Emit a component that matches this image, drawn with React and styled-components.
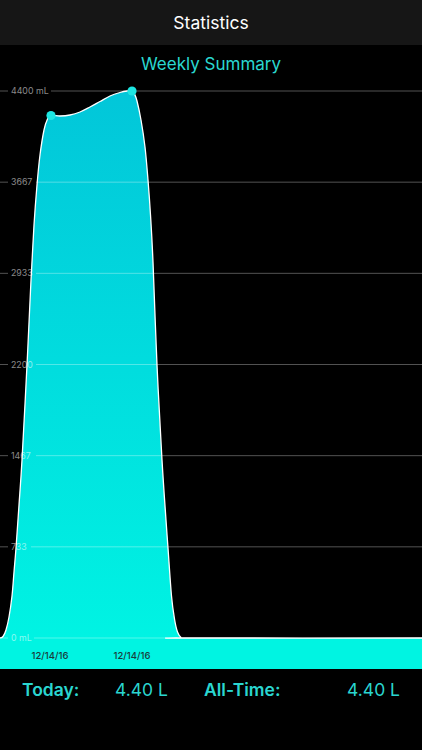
import React from 'react';
import styled, { createGlobalStyle } from 'styled-components';

const GlobalStyle = createGlobalStyle`
  html, body {
    margin: 0;
    padding: 0;
    background: #000;
  }
  body {
    font-family: Inter, "Open Sans", "Liberation Sans", sans-serif;
    -webkit-font-smoothing: antialiased;
  }
`;

const Screen = styled.div`
  width: 422px;
  height: 750px;
  background: #000;
  display: flex;
  flex-direction: column;
  overflow: hidden;
`;

const NavBar = styled.div`
  height: 45px;
  flex-shrink: 0;
  background: #161616;
  display: flex;
  align-items: center;
  justify-content: center;
  color: #fff;
  font-size: 17.5px;
  font-weight: 400;
`;

const Heading = styled.div`
  height: 38px;
  flex-shrink: 0;
  display: flex;
  align-items: center;
  justify-content: center;
  color: #2ad8d0;
  font-size: 17px;
`;

const ChartSvg = styled.svg`
  display: block;
  flex-shrink: 0;
`;

const AxisBand = styled.div`
  height: 24px;
  flex-shrink: 0;
  background: #00f4e2;
  position: relative;
`;

const DateLabel = styled.span`
  position: absolute;
  top: 5px;
  transform: translateX(-50%);
  font-size: 9.5px;
  font-weight: 500;
  color: #1b3b3b;
`;

const Stats = styled.div`
  display: grid;
  grid-template-columns: 93px 89px 1fr auto;
  align-items: center;
  padding: 0 22px;
  height: 40px;
  color: #2ad6d0;
  font-size: 17.5px;
`;

const StatLabel = styled.span`
  font-weight: 600;
`;

const StatValue = styled.span`
  font-weight: 400;
`;

// chart geometry, in screen coordinates
const TOP = 83;
const HEIGHT = 562;
const ZERO_Y = 638;
const MAX_Y = 91;

const grid = [
  { label: '4400 mL', w: 35 },
  { label: '3667', w: 20 },
  { label: '2933', w: 20 },
  { label: '2200', w: 20 },
  { label: '1467', w: 20 },
  { label: '733', w: 15 },
  { label: '0 mL', w: 18 },
];

const outline = [
  [0, 638], [3, 636.5], [6, 630], [9, 617], [12, 596], [14, 572], [16, 548],
  [19, 505], [22, 460], [27, 365], [31, 280], [34, 225], [37, 185], [40, 155],
  [44, 130], [47.5, 119], [51, 115.5], [60, 116], [70, 115], [80, 112],
  [90, 107], [100, 101.5], [110, 96], [120, 92.5], [127, 91], [132, 91],
  [134.5, 94], [137, 101], [141, 120], [145, 147], [148, 180], [150.5, 215],
  [153, 262], [157, 365], [162, 460], [166, 520], [168, 548], [171.5, 596],
  [174.5, 619], [177.5, 632], [181, 637.5], [184, 638], [422, 638],
];

function smoothPath(pts) {
  let d = `M ${pts[0][0]} ${pts[0][1]}`;
  for (let i = 0; i < pts.length - 1; i++) {
    const p0 = pts[i - 1] || pts[i];
    const p1 = pts[i];
    const p2 = pts[i + 1];
    const p3 = pts[i + 2] || p2;
    const c1x = p1[0] + (p2[0] - p0[0]) / 6;
    const c1y = p1[1] + (p2[1] - p0[1]) / 6;
    const c2x = p2[0] - (p3[0] - p1[0]) / 6;
    const c2y = p2[1] - (p3[1] - p1[1]) / 6;
    d += ` C ${c1x.toFixed(2)} ${c1y.toFixed(2)}, ${c2x.toFixed(2)} ${c2y.toFixed(2)}, ${p2[0]} ${p2[1]}`;
  }
  return d;
}

function Chart() {
  const line = smoothPath(outline);
  const area = `${line} L 422 ${ZERO_Y} L 0 ${ZERO_Y} Z`;
  const step = (ZERO_Y - MAX_Y) / 6;

  return (
    <ChartSvg width="422" height={HEIGHT} viewBox={`0 ${TOP} 422 ${HEIGHT}`}>
      <defs>
        <linearGradient id="fill" x1="0" y1={MAX_Y} x2="0" y2={ZERO_Y} gradientUnits="userSpaceOnUse">
          <stop offset="0" stopColor="#02c6d9" />
          <stop offset="1" stopColor="#00f3e3" />
        </linearGradient>
      </defs>
      <path d={area} fill="url(#fill)" />
      <rect x="0" y={ZERO_Y} width="422" height={TOP + HEIGHT - ZERO_Y} fill="#00f4e2" />
      {grid.map((g, i) => {
        const y = MAX_Y + i * step;
        return (
          <g key={g.label}>
            <line x1="0" y1={y} x2="8" y2={y} stroke="rgba(255,255,255,0.32)" strokeWidth="1" />
            <line x1={11 + g.w + 5} y1={y} x2="422" y2={y} stroke="rgba(255,255,255,0.32)" strokeWidth="1" />
            <text
              x="11"
              y={y + 3}
              fontSize="8.8"
              fill="rgba(255,255,255,0.55)"
              fontFamily="Inter, 'Liberation Sans', sans-serif"
            >
              {g.label}
            </text>
          </g>
        );
      })}
      <path d={line} fill="none" stroke="#fff" strokeWidth="1.3" />
      <circle cx="51" cy="115.5" r="4.6" fill="#1de6e2" />
      <circle cx="132" cy="91" r="4.6" fill="#1de6e2" />
    </ChartSvg>
  );
}

export default function App() {
  const dates = [
    { id: 1, x: 50, text: '12/14/16' },
    { id: 2, x: 132, text: '12/14/16' },
  ];

  return (
    <>
      <GlobalStyle />
      <Screen>
        <NavBar>Statistics</NavBar>
        <Heading>Weekly Summary</Heading>
        <Chart />
        <AxisBand>
          {dates.map((d) => (
            <DateLabel key={d.id} style={{ left: d.x }}>{d.text}</DateLabel>
          ))}
        </AxisBand>
        <Stats>
          <StatLabel>Today:</StatLabel>
          <StatValue>4.40 L</StatValue>
          <StatLabel>All-Time:</StatLabel>
          <StatValue>4.40 L</StatValue>
        </Stats>
      </Screen>
    </>
  );
}
